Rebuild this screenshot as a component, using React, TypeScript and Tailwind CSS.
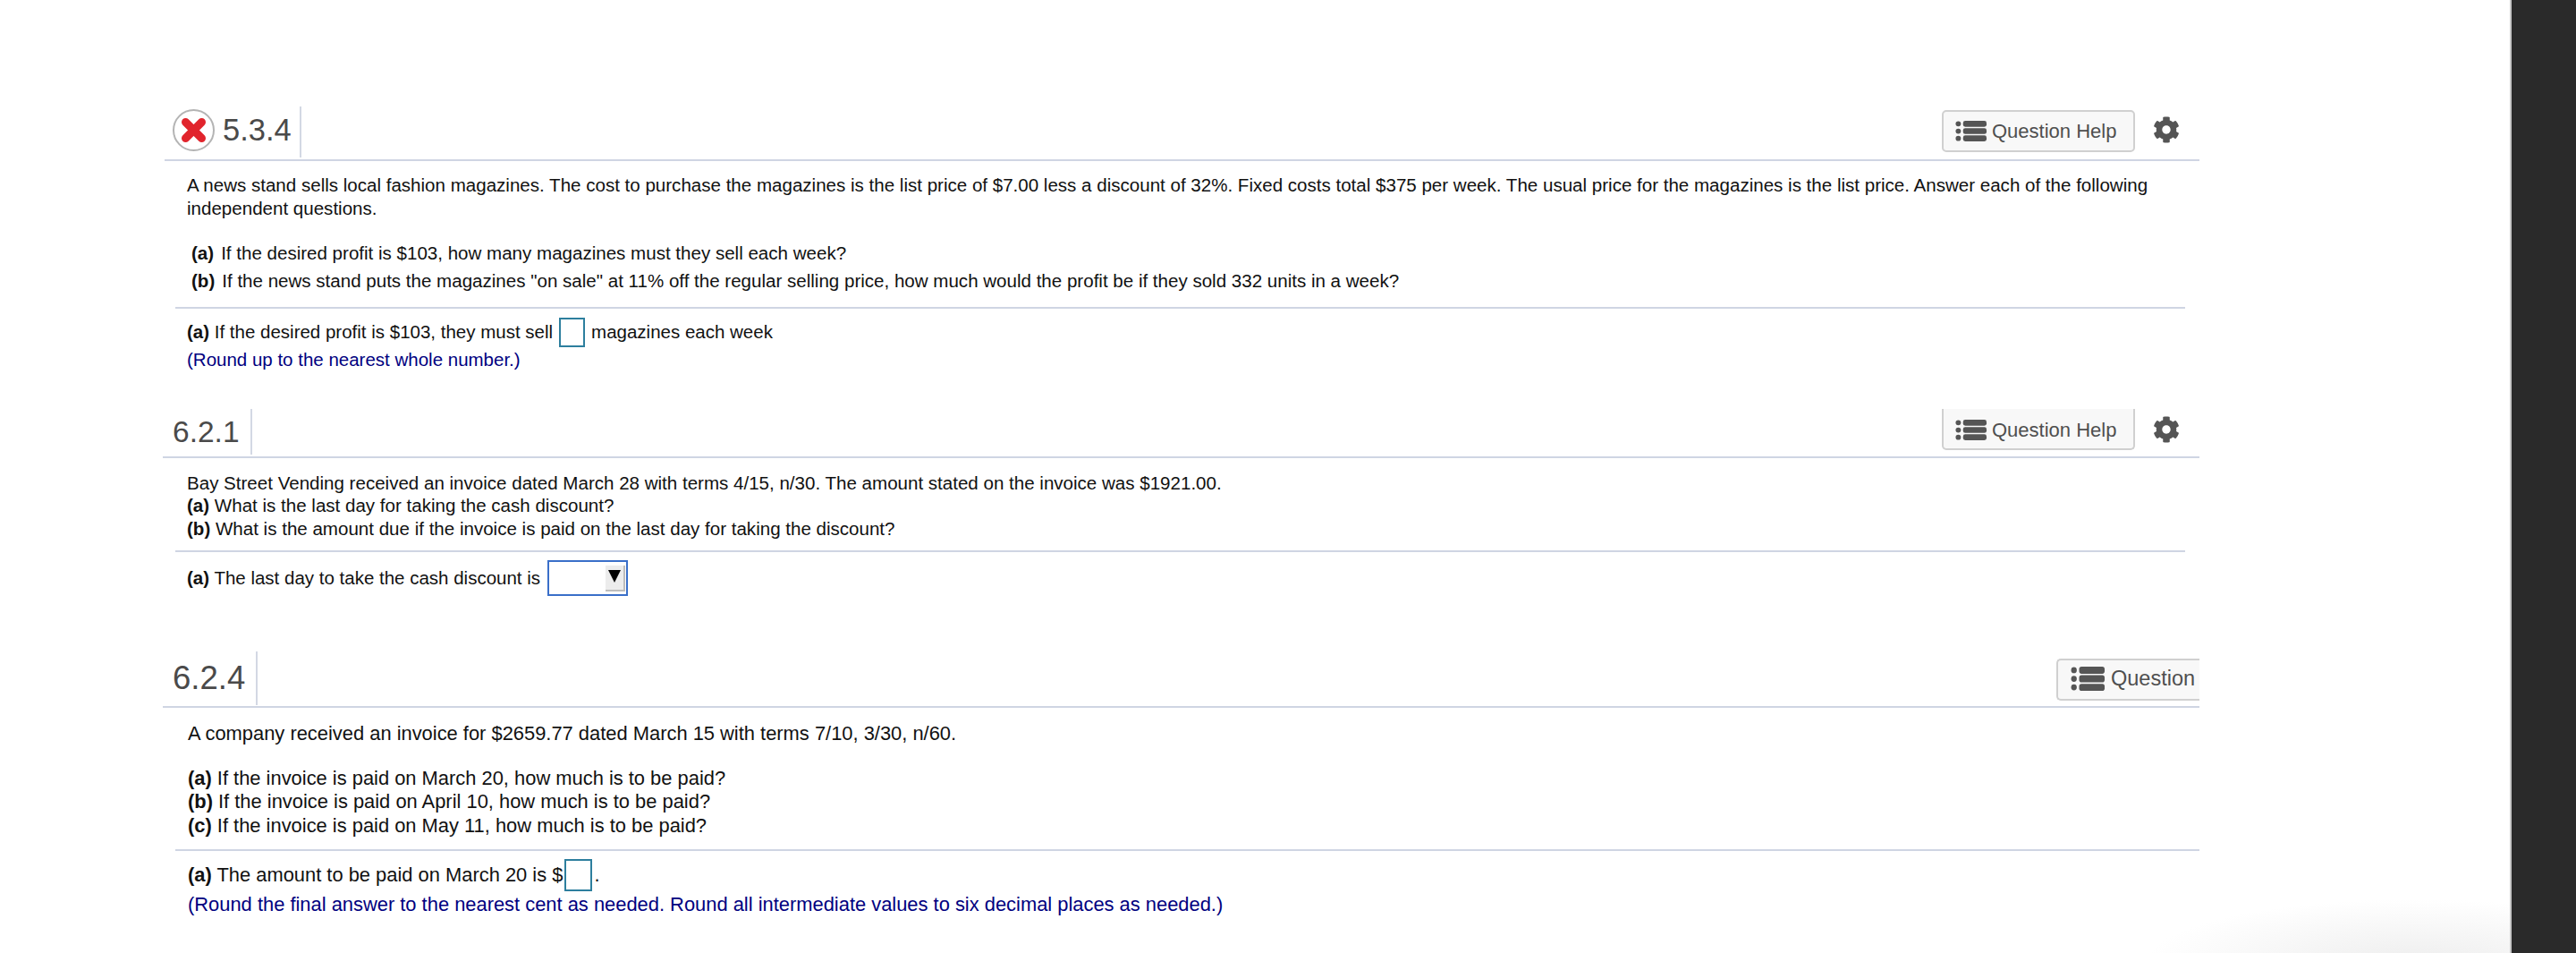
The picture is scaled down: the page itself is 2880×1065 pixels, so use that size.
import React from "react";
import { FaCog } from "react-icons/fa";

function ListIcon({ className }: { className: string }) {
  return (
    <svg viewBox="0 0 36 24" className={className} fill="#555555" preserveAspectRatio="none">
      <circle cx="3.5" cy="3.5" r="3" />
      <circle cx="3.5" cy="12" r="3" />
      <circle cx="3.5" cy="20.5" r="3" />
      <rect x="9" y="0" width="27" height="7" rx="2.5" />
      <rect x="9" y="8.5" width="27" height="7" rx="2.5" />
      <rect x="9" y="17" width="27" height="7" rx="2.5" />
    </svg>
  );
}

function WrongIcon() {
  return (
    <svg viewBox="0 0 47 47" className="w-[47px] h-[47px] shrink-0">
      <circle cx="23.5" cy="23.5" r="22.5" fill="#ffffff" stroke="#b4b4b4" strokeWidth="2" />
      <path d="M14.5 14.5 L32.5 32.5 M32.5 14.5 L14.5 32.5" stroke="#e1242c" strokeWidth="9" strokeLinecap="round" />
    </svg>
  );
}

function HelpButton({ clipped }: { clipped?: boolean }) {
  return (
    <div
      className={
        "w-[216px] flex items-center pl-[13px] gap-[6px] bg-[#f8f8f8] border-2 border-[#d0d0d0] rounded-[5px] text-[22px] text-[#4f4f4f] " +
        (clipped ? "h-[46px] pt-[3px] border-t-0 rounded-t-none" : "h-[47px]")
      }
    >
      <ListIcon className="w-[35px] h-[23px]" />
      <span>Question Help</span>
    </div>
  );
}

function Answer({ children }: { children: React.ReactNode }) {
  return <div className="flex items-center">{children}</div>;
}

export default function App() {
  return (
    <div
      className="flex h-[1065px] w-[2880px] overflow-hidden bg-white text-[#111111]"
      style={{ fontFamily: '"Liberation Sans", Arial, sans-serif' }}
    >
      <main className="relative w-[2806px] shrink-0 pt-[119px] bg-[radial-gradient(ellipse_300px_70px_at_2700px_1075px,#eeeeee,#ffffff)]">
        {/* 5.3.4 */}
        <section className="ml-[184px] w-[2275px]">
          <header className="h-[61px] flex border-b-2 border-[#cfd5e3] pb-[2px]">
            <div className="flex items-center h-[57px] border-r-2 border-[#d3d8e4] pl-[9px] pr-[9px]">
              <div className="mt-[-4px] flex items-center">
                <WrongIcon />
                <span className="ml-[9px] text-[34.5px] text-[#4a4a4a] leading-none">5.3.4</span>
              </div>
            </div>
            <div className="flex-1 flex justify-end items-start pt-[4px]">
              <HelpButton />
              <FaCog className="ml-[20px] mr-[22px] mt-[7px] w-[30px] h-[30px] text-[#555555]" />
            </div>
          </header>
          <div className="pl-[25px] pt-[14px] text-[20.55px] leading-[26px]">
            <p>
              A news stand sells local fashion magazines. The cost to purchase the magazines is the list price of $7.00 less a discount of 32%. Fixed costs total $375 per week. The usual price for the magazines is the list price. Answer each of the following
              <br />
              independent questions.
            </p>
            <div className="mt-[21px] pl-[5px] leading-[31px]">
              <p><b>(a)</b><span className="ml-[8px]">If the desired profit is $103, how many magazines must they sell each week?</span></p>
              <p><b>(b)</b><span className="ml-[8px]">If the news stand puts the magazines "on sale" at 11% off the regular selling price, how much would the profit be if they sold 332 units in a week?</span></p>
            </div>
          </div>
          <div className="ml-[12px] mr-[16px] mt-[14px] border-t-2 border-[#cfd5e3] pl-[13px] pt-[10px] text-[20.5px]">
            <Answer>
              <span><b>(a)</b> If the desired profit is $103, they must sell</span>
              <span className="mx-[7px] w-[29px] h-[33px] border-2 border-[#2d7f9e] bg-white" />
              <span>magazines each week</span>
            </Answer>
            <p className="mt-[-1px] text-[#000080]">(Round up to the nearest whole number.)</p>
          </div>
        </section>

        {/* 6.2.1 */}
        <section className="ml-[182px] w-[2277px] mt-[39px]">
          <header className="h-[55px] flex border-b-2 border-[#cfd5e3] overflow-hidden">
            <div className="h-[51px] pl-[11px] pr-[12px] flex items-center border-r-2 border-[#d3d8e4]">
              <span className="text-[33.5px] text-[#4a4a4a] leading-none">6.2.1</span>
            </div>
            <div className="flex-1 flex justify-end items-start">
              <HelpButton clipped />
              <FaCog className="ml-[20px] mr-[22px] mt-[8px] w-[30px] h-[30px] text-[#555555]" />
            </div>
          </header>
          <div className="pl-[27px] pt-[15px] text-[20.55px] leading-[25.5px]">
            <p>Bay Street Vending received an invoice dated March 28 with terms 4/15, n/30. The amount stated on the invoice was $1921.00.</p>
            <p><b>(a)</b> What is the last day for taking the cash discount?</p>
            <p><b>(b)</b> What is the amount due if the invoice is paid on the last day for taking the discount?</p>
          </div>
          <div className="ml-[14px] mr-[16px] mt-[12px] border-t-2 border-[#cfd5e3] pl-[13px] pt-[9px] text-[20.5px]">
            <Answer>
              <span><b>(a)</b> The last day to take the cash discount is</span>
              <span className="ml-[8px] w-[90px] h-[40px] border-2 border-[#3a6fc9] bg-white flex justify-end items-start pt-[4px] pr-[1px]">
                <span className="w-[22px] h-[29px] bg-[#ececec] border-r-2 border-b-2 border-[#bdbdbd] flex justify-center pt-[5px]">
                  <svg viewBox="0 0 14 14" className="w-[14px] h-[14px]" fill="#000000"><path d="M0 0H14L7 14Z" /></svg>
                </span>
              </span>
            </Answer>
          </div>
        </section>

        {/* 6.2.4 */}
        <section className="ml-[182px] w-[2277px] mt-[62px]">
          <header className="h-[63px] flex border-b-2 border-[#cfd5e3] overflow-hidden">
            <div className="h-[60px] pl-[11px] pr-[12px] flex items-center border-r-2 border-[#d3d8e4]">
              <span className="text-[36.5px] text-[#4a4a4a] leading-none">6.2.4</span>
            </div>
            <div className="flex-1 flex justify-end items-start pt-[8px]">
              <div className="w-[160px] h-[47px] shrink-0 flex items-center pl-[14px] pb-[2px] gap-[7px] bg-[#f8f8f8] border-2 border-r-0 border-[#d0d0d0] rounded-l-[5px] text-[23.5px] text-[#4f4f4f] overflow-hidden">
                <ListIcon className="w-[38px] h-[27px] shrink-0" />
                <span className="whitespace-nowrap">Question</span>
              </div>
            </div>
          </header>
          <div className="pl-[28px] pt-[16px] text-[21.9px] leading-[26.5px]">
            <p>A company received an invoice for $2659.77 dated March 15 with terms 7/10, 3/30, n/60.</p>
            <div className="mt-[23px]">
              <p><b>(a)</b> If the invoice is paid on March 20, how much is to be paid?</p>
              <p><b>(b)</b> If the invoice is paid on April 10, how much is to be paid?</p>
              <p><b>(c)</b> If the invoice is paid on May 11, how much is to be paid?</p>
            </div>
          </div>
          <div className="ml-[14px] mt-[13px] border-t-2 border-[#cfd5e3] pl-[14px] pt-[9px] text-[21.9px]">
            <Answer>
              <span><b>(a)</b> The amount to be paid on March 20 is $</span>
              <span className="ml-[2px] mr-[2px] w-[31px] h-[36px] border-2 border-[#2d7f9e] bg-white" />
              <span>.</span>
            </Answer>
            <p className="mt-[-1px] text-[#000080]">(Round the final answer to the nearest cent as needed. Round all intermediate values to six decimal places as needed.)</p>
          </div>
        </section>
      </main>
      <aside className="flex-1 bg-[#2a2a2a] border-l-2 border-[#c8c8c8]" />
    </div>
  );
}
